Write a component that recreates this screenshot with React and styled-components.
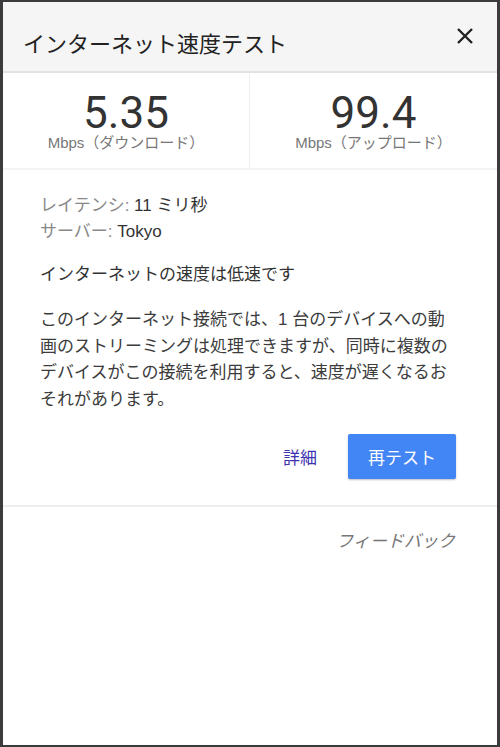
import React from "react"
import styled, { createGlobalStyle } from "styled-components"

const GlobalStyle = createGlobalStyle`
  html, body {
    margin: 0;
    padding: 0;
    background: #3b3b3d;
  }
  * {
    box-sizing: border-box;
  }
`

const Frame = styled.div`
  padding: 2px 3px;
  min-height: 100vh;
`

const Panel = styled.div`
  height: 743px;
  background: #fff;
  display: flex;
  flex-direction: column;
  font-family: "Liberation Sans", "Noto Sans CJK JP", sans-serif;
  color: #333;
`

const Header = styled.header`
  height: 71px;
  background: #f5f5f5;
  border-bottom: 2px solid #e2e2e2;
  display: flex;
  align-items: flex-start;
  justify-content: space-between;
  padding: 25px 24px 0 20px;
`

const Title = styled.h1`
  margin: 0;
  font-family: "Noto Sans CJK JP", sans-serif;
  font-size: 22px;
  line-height: 30px;
  font-weight: 400;
  color: #222;
`

const CloseButton = styled.button`
  margin-top: 1px;
  width: 16px;
  height: 16px;
  padding: 0;
  border: 0;
  background: none;
  color: #222;
  cursor: pointer;
  display: flex;
`

const Stats = styled.section`
  display: grid;
  grid-template-columns: 1fr 1fr;
  border-bottom: 2px solid #f3f3f3;
`

const Stat = styled.div`
  display: flex;
  flex-direction: column;
  align-items: center;
  padding: 20px 0 16px;
  border-right: ${(p) => (p.$divided ? "1px solid #efefef" : "none")};
`

const Value = styled.div`
  font-family: Roboto, "Liberation Sans", sans-serif;
  font-size: 44px;
  line-height: 40px;
  color: #333;
`

const Unit = styled.div`
  font-size: 15px;
  line-height: 18px;
  margin-top: 1px;
  color: #777;
`

const Body = styled.section`
  padding: 23px 41px 26px 37px;
  font-size: 17px;
`

const Meta = styled.div`
  line-height: 26px;
`

const MetaLabel = styled.span`
  color: #888;
`

const Status = styled.p`
  margin: 17px 0 0;
  line-height: 26px;
`

const Description = styled.p`
  margin: 19px 0 0;
  line-height: 26.7px;
  color: #3c3c3c;
`

const Actions = styled.div`
  margin-top: 20px;
  display: flex;
  justify-content: flex-end;
  align-items: center;
  gap: 31px;
`

const DetailsLink = styled.a`
  font-size: 17px;
  color: #3d33b0;
  text-decoration: none;
  cursor: pointer;
`

const RetestButton = styled.button`
  height: 45px;
  padding: 0 20px;
  border: 0;
  border-radius: 2px;
  background: #4285f4;
  color: #fff;
  font-family: "Noto Sans CJK JP", sans-serif;
  font-size: 17px;
  box-shadow: 0 1px 2px rgba(0, 0, 0, 0.25);
  cursor: pointer;
`

const Footer = styled.footer`
  border-top: 2px solid #eee;
  display: flex;
  justify-content: flex-end;
  padding: 22px 42px 0;
`

const Feedback = styled.a`
  font-size: 17px;
  line-height: 26px;
  font-style: italic;
  color: #777;
  cursor: pointer;
`

function CloseIcon() {
  return (
    <svg width="16" height="16" viewBox="0 0 16 16">
      <path
        d="M1 1 L15 15 M15 1 L1 15"
        stroke="currentColor"
        strokeWidth="2.4"
        fill="none"
      />
    </svg>
  )
}

export default function App() {
  return (
    <>
      <GlobalStyle />
      <Frame>
        <Panel>
          <Header>
            <Title>インターネット速度テスト</Title>
            <CloseButton aria-label="閉じる">
              <CloseIcon />
            </CloseButton>
          </Header>
          <Stats>
            <Stat $divided>
              <Value>5.35</Value>
              <Unit>Mbps（ダウンロード）</Unit>
            </Stat>
            <Stat>
              <Value>99.4</Value>
              <Unit>Mbps（アップロード）</Unit>
            </Stat>
          </Stats>
          <Body>
            <Meta>
              <div>
                <MetaLabel>レイテンシ:</MetaLabel> 11 ミリ秒
              </div>
              <div>
                <MetaLabel>サーバー:</MetaLabel> Tokyo
              </div>
            </Meta>
            <Status>インターネットの速度は低速です</Status>
            <Description>
              このインターネット接続では、1
              台のデバイスへの動画のストリーミングは処理できますが、同時に複数のデバイスがこの接続を利用すると、速度が遅くなるおそれがあります。
            </Description>
            <Actions>
              <DetailsLink>詳細</DetailsLink>
              <RetestButton>再テスト</RetestButton>
            </Actions>
          </Body>
          <Footer>
            <Feedback>フィードバック</Feedback>
          </Footer>
        </Panel>
      </Frame>
    </>
  )
}
